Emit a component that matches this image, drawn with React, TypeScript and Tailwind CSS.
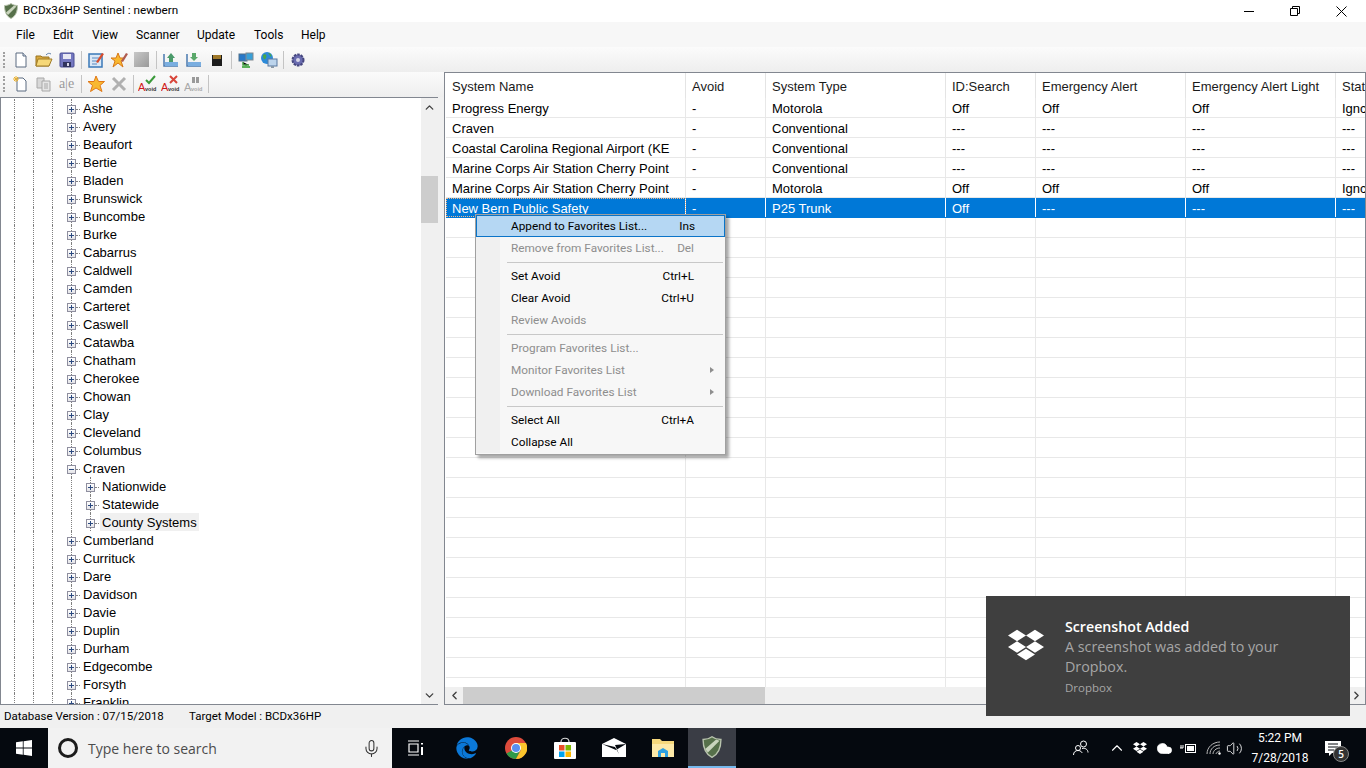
import { ChevronLeft, ChevronRight, ChevronUp, ChevronDown, Mic, Cloud, Volume2 } from "lucide-react";
import { FaDropbox, FaEdge } from "react-icons/fa";

const counties = [
  "Ashe", "Avery", "Beaufort", "Bertie", "Bladen", "Brunswick", "Buncombe", "Burke", "Cabarrus", "Caldwell",
  "Camden", "Carteret", "Caswell", "Catawba", "Chatham", "Cherokee", "Chowan", "Clay", "Cleveland", "Columbus",
];
const countiesAfter = ["Cumberland", "Currituck", "Dare", "Davidson", "Davie", "Duplin", "Durham", "Edgecombe", "Forsyth", "Franklin"];

const columns = [
  { label: "System Name", w: "w-[240px]" },
  { label: "Avoid", w: "w-[80px]" },
  { label: "System Type", w: "w-[180px]" },
  { label: "ID:Search", w: "w-[90px]" },
  { label: "Emergency Alert", w: "w-[150px]" },
  { label: "Emergency Alert Light", w: "w-[150px]" },
  { label: "Stat", w: "w-[40px]" },
];

const rows = [
  ["Progress Energy", "-", "Motorola", "Off", "Off", "Off", "Ignc"],
  ["Craven", "-", "Conventional", "---", "---", "---", "---"],
  ["Coastal Carolina Regional Airport (KE", "-", "Conventional", "---", "---", "---", "---"],
  ["Marine Corps Air Station Cherry Point", "-", "Conventional", "---", "---", "---", "---"],
  ["Marine Corps Air Station Cherry Point", "-", "Motorola", "Off", "Off", "Off", "Ignc"],
  ["New Bern Public Safety", "-", "P25 Trunk", "Off", "---", "---", "---"],
];

const menuItems = [
  { label: "Append to Favorites List...", key: "Ins", active: true },
  { label: "Remove from Favorites List...", key: "Del", disabled: true },
  { sep: true },
  { label: "Set Avoid", key: "Ctrl+L" },
  { label: "Clear Avoid", key: "Ctrl+U" },
  { label: "Review Avoids", disabled: true },
  { sep: true },
  { label: "Program Favorites List...", disabled: true },
  { label: "Monitor Favorites List", disabled: true, sub: true },
  { label: "Download Favorites List", disabled: true, sub: true },
  { sep: true },
  { label: "Select All", key: "Ctrl+A" },
  { label: "Collapse All" },
];

function Shield({ size = 16 }: { size?: number }) {
  return (
    <svg width={size} height={size} viewBox="0 0 16 16">
      <path d="M8 .5C6 2 3.500 2.500 1.500 2.500C1.500 8 3 13 8 15.500C13 13 14.500 8 14.500 2.500C12.500 2.500 10 2 8 .5Z" fill="#56704a" stroke="#b9c4ae" strokeWidth="1" />
      <path d="M3 9.500L11 2.500L13.500 3.500L5 12Z" fill="#c9d4bd" />
    </svg>
  );
}

function Sep() {
  return <span className="ml-[3px] mr-[2px] h-[18px] w-px bg-[#c4c4c4]" />;
}

function Grip() {
  return <span className="ml-[2px] mr-[4px] h-[16px] w-[2px] border-l-2 border-dotted border-[#a0a0a0]" />;
}

function Tool({ children }: { children: React.ReactNode }) {
  return <span className="flex h-[22px] w-[23px] items-center justify-center">{children}</span>;
}

function Svg({ children }: { children: React.ReactNode }) {
  return <svg width="18" height="18" viewBox="0 0 18 18">{children}</svg>;
}

function AvoidIcon({ mark }: { mark: "check" | "x" | "bino" }) {
  const gray = mark === "bino";
  return (
    <svg width="19" height="18" viewBox="0 0 19 18" fontFamily="Liberation Sans, sans-serif">
      {mark === "check" && <path d="M8 5L11 8L17 1" fill="none" stroke="#3a9a3a" strokeWidth="2" />}
      {mark === "x" && <path d="M9 1L16 8M16 1L9 8" fill="none" stroke="#d8453a" strokeWidth="2" />}
      {mark === "bino" && <path d="M8 2h3v6H8ZM12 2h3v6h-3Z" fill="#9a9a9a" />}
      <text x="0" y="16" fontSize="11" fill={gray ? "#a8a8a8" : "#d01818"}>A</text>
      <text x="7" y="16" fontSize="5.500" fontWeight="700" fill={gray ? "#a8a8a8" : "#303030"}>void</text>
    </svg>
  );
}

function TopToolbar() {
  return (
    <div className="flex h-[25px] items-center bg-gradient-to-b from-[#fbfbfb] to-[#eeeeee] pl-[1px]">
      <Grip />
      <Tool><Svg><path d="M4 2h7l3 3v11H4Z" fill="#fff" stroke="#5a6a80" /><path d="M11 2v3h3" fill="#dbe4ee" stroke="#5a6a80" /></Svg></Tool>
      <Tool><Svg><path d="M1 5h5l1 1h7v9H1Z" fill="#d9a93e" stroke="#9a7420" /><path d="M3 8h14l-3 7H1Z" fill="#f6d878" stroke="#a07c28" /><path d="M11 4c2-2 3-2 5-1" fill="none" stroke="#5a7ea8" /></Svg></Tool>
      <Tool><Svg><rect x="2" y="2" width="14" height="14" rx="1" fill="#7478c0" stroke="#4a4e94" /><rect x="5" y="3" width="8" height="5" fill="#e8e8f4" /><rect x="5" y="11" width="8" height="5" fill="#30345e" /><rect x="9" y="12" width="2" height="3" fill="#d8d8e8" /></Svg></Tool>
      <Sep />
      <Tool><Svg><rect x="2" y="3" width="13" height="13" fill="#dbe8f6" stroke="#3a78b8" strokeWidth="1.500" /><path d="M5 7h7M5 10h7M5 13h5" stroke="#5a8ac0" /><path d="M9 11L15 2L17 3L11 12Z" fill="#d84c2c" /></Svg></Tool>
      <Tool><Svg><path d="M8 2l2 5h5l-4 3 2 6-5-4-5 4 2-6-4-3h5Z" fill="#f8b830" stroke="#d87818" /><path d="M11 10L16 2L18 3L13 11Z" fill="#b05c50" /></Svg></Tool>
      <Tool><span className="block h-[15px] w-[15px] bg-gradient-to-br from-[#c8c8c8] to-[#9a9a9a]" /></Tool>
      <Sep />
      <Tool><Svg><path d="M2 3v12h14" fill="none" stroke="#4a7ab0" strokeWidth="1.500" /><rect x="3" y="11" width="13" height="4" fill="#7aaee0" /><path d="M9 2l4 5h-2v4H7V7H5Z" fill="#4a9a6a" /></Svg></Tool>
      <Tool><Svg><path d="M2 3v12h14" fill="none" stroke="#4a7ab0" strokeWidth="1.500" /><rect x="3" y="11" width="13" height="4" fill="#7aaee0" /><path d="M9 10l4-4h-2V2H7v4H5Z" fill="#5aa86a" /></Svg></Tool>
      <Tool><Svg><path d="M4 4h10v11H4Z" fill="#1c1c1c" /><path d="M5 4h8v4H5Z" fill="#d8a030" /><path d="M6 4v4M8 4v4M10 4v4M12 4v4" stroke="#1c1c1c" strokeWidth="0.600" /></Svg></Tool>
      <Sep />
      <Tool><Svg><rect x="2" y="3" width="8" height="7" fill="#2878c8" stroke="#50708a" /><rect x="9" y="2" width="7" height="7" fill="#38a0d8" stroke="#808890" /><path d="M6 11v3h6M9 14v3" stroke="#48a048" strokeWidth="1.500" /><rect x="5" y="15" width="8" height="2" fill="#58b058" /></Svg></Tool>
      <Tool><Svg><circle cx="7" cy="7" r="6" fill="#2c8ad8" /><path d="M3 4c3-2 4 1 3 3s-3 2-3-3ZM8 2c3 0 4 3 3 4Z" fill="#48a848" /><rect x="8" y="8" width="9" height="7" fill="#bcd4ec" stroke="#5878a0" /><rect x="11" y="15" width="3" height="2" fill="#8898a8" /></Svg></Tool>
      <Sep />
      <Tool><Svg><circle cx="9" cy="9" r="5.500" fill="#6a6cb0" stroke="#45467e" strokeWidth="2" strokeDasharray="2.500 1" /><circle cx="9" cy="9" r="2" fill="#d8d8ea" /></Svg></Tool>
    </div>
  );
}

function SecondToolbar() {
  return (
    <div className="flex h-[25px] items-center bg-gradient-to-b from-[#fbfbfb] to-[#eeeeee] pb-[1px] pl-[1px]">
      <Grip />
      <Tool><Svg><path d="M5 3h6l3 3v10H5Z" fill="#fff" stroke="#5a6a80" /><path d="M4 1v6M1 4h6M2 2l4 4M6 2l-4 4" stroke="#e8b030" /></Svg></Tool>
      <Tool><Svg><path d="M2 3h7v10H2Z" fill="#d8d8d8" stroke="#a8a8a8" /><path d="M7 6h8v10H7Z" fill="#e6e6e6" stroke="#a8a8a8" /><path d="M9 9h4M9 11h4M9 13h4" stroke="#a8a8a8" /></Svg></Tool>
      <Tool><span className="font-['Liberation_Serif',serif] text-[14px] leading-none text-[#9a9a9a]">a|e</span></Tool>
      <Sep />
      <Tool><Svg><path d="M9 1l2.500 5.500h6l-4.500 4 2 6L9 13l-5.500 3.500 2-6L1 6.500h6Z" fill="#f8b830" stroke="#e07818" /></Svg></Tool>
      <Tool><Svg><path d="M3 3L15 15M15 3L3 15" stroke="#b0b0b0" strokeWidth="3" /></Svg></Tool>
      <Sep />
      <Tool><AvoidIcon mark="check" /></Tool>
      <Tool><AvoidIcon mark="x" /></Tool>
      <Tool><AvoidIcon mark="bino" /></Tool>
      <Sep />
    </div>
  );
}

function Expander({ open }: { open?: boolean }) {
  return (
    <span className="relative flex h-full w-[9px] flex-none items-center">
      <span className="absolute left-[4px] top-0 h-full w-px border-l border-dotted border-[#808080]" />
      <span className="relative mt-[3px] flex h-[9px] w-[9px] items-center justify-center border border-[#8f8f9f] bg-gradient-to-b from-white to-[#e4e4e8]">
        <span className="absolute h-px w-[5px] bg-[#2c4a80]" />
        {!open && <span className="absolute h-[5px] w-px bg-[#2c4a80]" />}
      </span>
      <span className="absolute left-[9px] mt-[3px] w-[4px] border-t border-dotted border-[#808080]" />
    </span>
  );
}

function TreeRow({ label, depth = 0, open, hover }: { label: string; depth?: number; open?: boolean; hover?: boolean }) {
  return (
    <div className="flex h-[18px] items-center pl-[13px]">
      <span className="h-full w-[19px] border-l border-dotted border-[#808080]" />
      <span className="h-full w-[19px] border-l border-dotted border-[#808080]" />
      <span className="h-full w-[15px] border-l border-dotted border-[#808080]" />
      {depth === 1 && <span className="ml-[4px] h-full w-[15px] border-l border-dotted border-[#808080]" />}
      <Expander open={open} />
      <span className={`ml-[5px] h-full px-[2px] ${hover ? "bg-[#f0f0f0]" : ""} font-['Liberation_Sans',sans-serif] text-[13px] leading-[20px] text-black`}>
        {label}
      </span>
    </div>
  );
}

function Tree() {
  return (
    <div className="flex h-[608px] w-[438px] flex-none border-b border-l border-t border-[#828790] bg-white">
      <div className="h-full min-w-0 flex-1 overflow-hidden pt-[1px]">
        {counties.map((c) => <TreeRow key={c} label={c} />)}
        <TreeRow label="Craven" open />
        <TreeRow label="Nationwide" depth={1} />
        <TreeRow label="Statewide" depth={1} />
        <TreeRow label="County Systems" depth={1} hover />
        {countiesAfter.map((c) => <TreeRow key={c} label={c} />)}
      </div>
      <div className="flex h-full w-[17px] flex-none flex-col bg-[#f0f0f0]">
        <span className="flex h-[18px] items-center justify-center"><ChevronUp size={13} strokeWidth={2.500} color="#404040" /></span>
        <div className="flex-1 pt-[60px]"><div className="h-[47px] bg-[#cdcdcd]" /></div>
        <span className="flex h-[18px] items-center justify-center"><ChevronDown size={13} strokeWidth={2.500} color="#404040" /></span>
      </div>
    </div>
  );
}

function Grid() {
  return (
    <div className="flex h-[633px] min-w-0 flex-1 flex-col overflow-hidden border border-[#828790] bg-white font-['Liberation_Sans',sans-serif] text-[13px]">
      <div className="flex h-[25px] flex-none pl-[1px]">
        {columns.map((c) => (
          <div key={c.label} className={`${c.w} flex-none overflow-hidden whitespace-nowrap border-r border-[#e4e4e4] pl-[6px] leading-[27px] text-[#1a1a1a]`}>
            {c.label}
          </div>
        ))}
      </div>
      <div className="min-h-0 flex-1 overflow-hidden pl-[1px]">
        {rows.map((r, i) => {
          const selected = i === rows.length - 1;
          return (
            <div key={i} className={`flex h-[20px] w-fit ${selected ? "bg-[#0078d7] text-white" : "text-black"} border-b ${selected ? "border-[#0078d7]" : "border-[#e8e8e8]"}`}>
              {r.map((v, j) => (
                <div key={j} className={`${columns[j].w} flex-none overflow-hidden whitespace-nowrap border-r ${selected ? "border-white" : "border-[#e8e8e8]"} pl-[6px] leading-[21px] ${selected && j === 0 ? "outline-1 -outline-offset-1 outline-dotted outline-[#f2b888]" : ""}`}>
                  {v}
                </div>
              ))}
            </div>
          );
        })}
        {Array.from({ length: 24 }).map((_, i) => (
          <div key={i} className="flex h-[20px] w-fit border-b border-[#e8e8e8]">
            {columns.map((c) => (
              <div key={c.label} className={`${c.w} flex-none border-r border-[#e8e8e8]`} />
            ))}
          </div>
        ))}
      </div>
      <div className="flex h-[17px] flex-none bg-[#f0f0f0]">
        <span className="flex w-[18px] items-center justify-center"><ChevronLeft size={13} strokeWidth={2.500} color="#404040" /></span>
        <div className="w-[302px] bg-[#cdcdcd]" />
        <div className="flex-1" />
        <span className="flex w-[18px] items-center justify-center"><ChevronRight size={13} strokeWidth={2.500} color="#404040" /></span>
      </div>
    </div>
  );
}

function ContextMenu() {
  return (
    <div className="absolute left-[475px] top-[214px] w-[251px] border border-[#a0a0a0] bg-[#f7f7f7] pb-[1px] shadow-[3px_3px_3px_rgba(0,0,0,0.35)] font-['Roboto',sans-serif] text-[11.800px]">
      {menuItems.map((m, i) => {
        if (m.sep) {
          return (
            <div key={i} className="flex h-[6px] items-center pr-[2px]">
              <span className="h-full w-[24px] bg-[#f0f0f0]" />
              <span className="ml-[7px] h-px flex-1 bg-[#c8c8c8]" />
            </div>
          );
        }
        return (
          <div key={i} className={`relative flex h-[22px] items-center justify-between leading-[22px] ${m.active ? "border border-[#0a74c8] bg-[#b5d7f3] pl-[34px] pr-[29px]" : "pl-[35px] pr-[31px]"} ${m.disabled ? "text-[#8e8e8e]" : "text-black"}`}>
            {!m.active && <span className="absolute left-0 top-0 h-full w-[24px] bg-[#f0f0f0]" />}
            <span className="relative">{m.label}</span>
            {m.key && <span>{m.key}</span>}
            {m.sub && <span className="absolute right-[11px] top-[8px] h-0 w-0 border-y-[3.500px] border-l-[4px] border-y-transparent border-l-[#8e8e8e]" />}
          </div>
        );
      })}
    </div>
  );
}

function Toast() {
  return (
    <div className="absolute left-[986px] top-[596px] flex h-[120px] w-[364px] bg-[#3f3f3f] font-['Open_Sans',sans-serif]">
      <div className="flex w-[79px] flex-none justify-center pl-[1px] pt-[31px]">
        <FaDropbox size={36} color="#ffffff" />
      </div>
      <div className="pt-[21px]">
        <div className="text-[14.200px] font-semibold leading-[20px] text-white">Screenshot Added</div>
        <div className="w-[250px] text-[14.300px] leading-[20px] text-[#a6a6a6]">A screenshot was added to your Dropbox.</div>
        <div className="mt-[1px] text-[11.500px] leading-[20px] text-[#a6a6a6]">Dropbox</div>
      </div>
    </div>
  );
}

function Taskbar() {
  return (
    <div className="flex h-[40px] flex-none items-stretch bg-[#05090f] font-['Open_Sans',sans-serif]">
      <div className="flex w-[48px] items-center justify-center">
        <svg width="16" height="16" viewBox="0 0 16 16" fill="#ffffff">
          <path d="M0 2.300L6.800 1.300V7.600H0ZM7.600 1.200L16 0V7.600H7.600ZM0 8.400H6.800V14.700L0 13.700ZM7.600 8.400H16V16L7.600 14.800Z" />
        </svg>
      </div>
      <div className="flex w-[344px] items-center bg-[#f2f2f2]">
        <span className="ml-[10px] h-[20px] w-[20px] rounded-full border-[3px] border-[#1c1c1c]" />
        <span className="ml-[10px] flex-1 pt-[1px] text-[14px] text-[#4c4c4c]">Type here to search</span>
        <Mic size={19} strokeWidth={1.300} color="#333333" className="mr-[11px]" />
      </div>
      <div className="flex w-[50px] items-center justify-center pr-[2px]">
        <svg width="17" height="16" viewBox="0 0 17 16" fill="none" stroke="#fff" strokeWidth="1.200">
          <path d="M0 1H11M0 15H11M1 4H10V12H1Z" />
          <path d="M14 3V4.500M14 7V15" strokeWidth="2" />
        </svg>
      </div>
      <div className="flex w-[50px] items-center justify-center"><FaEdge size={22} color="#0b78d8" /></div>
      <div className="flex w-[49px] items-center justify-center pr-[1px]">
        <svg width="22" height="22" viewBox="0 0 22 22">
          <circle cx="11" cy="11" r="11" fill="#dd4b3c" />
          <path d="M11 11L1.500 16.500A11 11 0 0 0 11 22L16.500 11Z" fill="#309a48" />
          <path d="M11 6H21A11 11 0 0 1 11 22L16 13Z" fill="#fbc52c" />
          <circle cx="11" cy="11" r="5" fill="#fff" />
          <circle cx="11" cy="11" r="4" fill="#5a8ff0" />
        </svg>
      </div>
      <div className="flex w-[49px] items-center justify-center pr-[2px]">
        <svg width="24" height="24" viewBox="0 0 24 24">
          <path d="M8 6C8 1 16 1 16 6" fill="none" stroke="#d8d8d8" strokeWidth="1.200" />
          <rect x="1" y="6" width="22" height="17" rx="1" fill="#ffffff" />
          <rect x="6" y="9" width="5.500" height="5.500" fill="#ea4f28" />
          <rect x="12.500" y="9" width="5.500" height="5.500" fill="#7db800" />
          <rect x="6" y="15.500" width="5.500" height="5.500" fill="#00a3ef" />
          <rect x="12.500" y="15.500" width="5.500" height="5.500" fill="#fdb800" />
        </svg>
      </div>
      <div className="flex w-[48px] items-center justify-center">
        <svg width="24" height="20" viewBox="0 0 24 20">
          <path d="M0 6L12 0L24 6V19H0Z" fill="#ffffff" />
          <path d="M0 6L14 12L24 6L13 7L17 16L13 9Z" fill="#05090f" />
        </svg>
      </div>
      <div className="flex w-[50px] items-center justify-center">
        <svg width="22" height="20" viewBox="0 0 22 20">
          <path d="M0 1h8l2 2h12v16H0Z" fill="#f6d87c" />
          <path d="M0 6h22v13H0Z" fill="#fde9a8" />
          <path d="M6 19v-6l5-3 5 3v6h-3v-4H9v4Z" fill="#2ea0e0" />
        </svg>
      </div>
      <div className="flex w-[48px] items-center justify-center border-b-[2px] border-[#76b9ed] bg-[#3a3d45]"><Shield size={22} /></div>
      <div className="flex-1" />
      <div className="flex items-center pr-[13px] text-white">
        <svg width="18" height="18" viewBox="0 0 18 18" fill="none" stroke="#fff" strokeWidth="1" className="mr-[18px]">
          <circle cx="11.500" cy="5" r="3" />
          <circle cx="6" cy="9" r="2.500" />
          <path d="M1.500 16c0-3 2-4.500 4.500-4.500S10 13 10 14M10 9.500c3-1 6 1 6 4" />
        </svg>
        <ChevronUp size={18} strokeWidth={1.500} className="mr-[7px]" />
        <FaDropbox size={14} className="mr-[9px]" />
        <Cloud size={17} fill="#fff" strokeWidth={1} className="mr-[7px]" />
        <svg width="16" height="12" viewBox="0 0 16 12" fill="none" stroke="#fff" className="mr-[10px]">
          <rect x="5.500" y="2.500" width="10" height="8" />
          <rect x="7" y="4" width="7" height="5" fill="#fff" stroke="none" />
          <path d="M0 6h3M1 3v3M3 3v3" />
        </svg>
        <svg width="16" height="14" viewBox="0 0 16 14" fill="none" stroke="#b8b8b8" strokeWidth="1" className="mr-[4px]">
          <path d="M1 13C1 6 7 1 14 1M4 13C4 8 8 4 14 4M7 13C7 10 10 7 14 7M10 13C10 12 12 10 14 10" />
          <circle cx="13.500" cy="12.500" r="1.200" fill="#fff" stroke="none" />
        </svg>
        <Volume2 size={17} strokeWidth={1.200} className="mr-[6px]" />
        <div className="w-[62px] text-center font-['Roboto',sans-serif] text-[12px] leading-[20px]">
          <div>5:22 PM</div>
          <div>7/28/2018</div>
        </div>
        <div className="relative ml-[2px] flex h-[40px] w-[40px] items-center justify-center">
          <svg width="16" height="15" viewBox="0 0 16 15">
            <path d="M0 0H16V12H7L4 15V12H0Z" fill="#fff" />
            <path d="M3 3H13M3 6H13M3 9H9" stroke="#05090f" />
          </svg>
          <span className="absolute left-[20px] top-[18px] flex h-[16px] w-[16px] items-center justify-center rounded-full border border-[#888] bg-[#333] text-[10px] font-semibold text-white">5</span>
        </div>
      </div>
    </div>
  );
}

export default function App() {
  return (
    <div className="relative flex h-[768px] w-[1366px] flex-col overflow-hidden bg-[#f0f0f0]">
      {/* Title bar */}
      <div className="flex h-[22px] flex-none items-center bg-white pl-[3px] font-['Roboto',sans-serif] text-[11.700px] text-black">
        <Shield />
        <span className="ml-[4px] flex-1">BCDx36HP Sentinel : newbern</span>
        <span className="flex w-[46px] justify-center pr-[4px]"><span className="h-px w-[10px] bg-black" /></span>
        <span className="flex w-[46px] justify-center pr-[4px]">
          <svg width="10" height="10" viewBox="0 0 10 10" fill="none" stroke="#000"><path d="M.5 2.500H7.500V9.500H.5ZM2.500 2.500V.5H9.500V7.500H7.500" /></svg>
        </span>
        <span className="flex w-[46px] justify-center pr-[4px]">
          <svg width="11" height="11" viewBox="0 0 11 11" stroke="#000"><path d="M.5 .5L10.500 10.500M10.500 .5L.5 10.500" /></svg>
        </span>
      </div>

      {/* Menu bar */}
      <div className="flex h-[25px] flex-none items-center bg-[#f7f7f7] pl-[16px] font-['Roboto',sans-serif] text-[12px] text-black">
        <span className="w-[37px]">File</span>
        <span className="w-[39px]">Edit</span>
        <span className="w-[44px]">View</span>
        <span className="w-[61px]">Scanner</span>
        <span className="w-[57px]">Update</span>
        <span className="w-[47px]">Tools</span>
        <span>Help</span>
      </div>

      <div className="flex-none"><TopToolbar /></div>

      <div className="flex min-h-0 flex-1">
        <div className="flex w-[444px] flex-none flex-col">
          <SecondToolbar />
          <Tree />
        </div>
        <Grid />
      </div>

      {/* Status bar */}
      <div className="flex h-[23px] flex-none items-center pl-[4px] font-['Roboto',sans-serif] text-[11.500px] text-black">
        <span className="w-[185px]">Database Version : 07/15/2018</span>
        <span>Target Model : BCDx36HP</span>
      </div>

      <Taskbar />
      <ContextMenu />
      <Toast />
    </div>
  );
}
